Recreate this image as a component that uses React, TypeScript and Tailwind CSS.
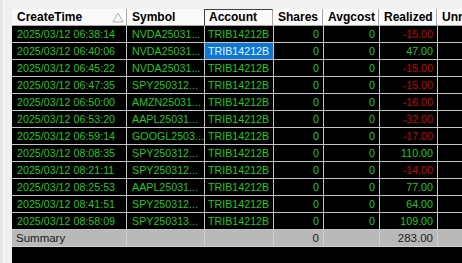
import React from "react";

type Row = { t: string; s: string; r: string; neg: boolean };

const rows: Row[] = [
  { t: "2025/03/12 06:38:14", s: "NVDA25031...", r: "-15.00", neg: true },
  { t: "2025/03/12 06:40:06", s: "NVDA25031...", r: "47.00", neg: false },
  { t: "2025/03/12 06:45:22", s: "NVDA25031...", r: "-15.00", neg: true },
  { t: "2025/03/12 06:47:35", s: "SPY250312...", r: "-15.00", neg: true },
  { t: "2025/03/12 06:50:00", s: "AMZN25031...", r: "-16.00", neg: true },
  { t: "2025/03/12 06:53:20", s: "AAPL25031...", r: "-32.00", neg: true },
  { t: "2025/03/12 06:59:14", s: "GOOGL2503...", r: "-17.00", neg: true },
  { t: "2025/03/12 08:08:35", s: "SPY250312...", r: "110.00", neg: false },
  { t: "2025/03/12 08:21:11", s: "SPY250312...", r: "-14.00", neg: true },
  { t: "2025/03/12 08:25:53", s: "AAPL25031...", r: "77.00", neg: false },
  { t: "2025/03/12 08:41:51", s: "SPY250312...", r: "64.00", neg: false },
  { t: "2025/03/12 08:58:09", s: "SPY250313...", r: "109.00", neg: false },
];

const font = { fontFamily: '"Liberation Sans", Arial, sans-serif' };

export default function App() {
  return (
    <div className="w-[462px] h-[263px] overflow-hidden bg-[#f0f0f0] flex" style={font}>
      <div className="w-[12px] shrink-0 flex">
        <div className="w-[3px] bg-[#e6e6e6]" />
        <div className="w-[1px] bg-[#fbfbfb]" />
        <div className="flex-1 bg-[#f0f0f0]" />
      </div>
      <div className="flex-1 flex flex-col min-w-0">
        <div className="h-[9px] shrink-0 bg-[#f0f0f0]" />
        <div className="flex-1 bg-black flex flex-col w-[470px]">
          {/* header */}
          <div className="flex h-[17px] shrink-0 bg-[#fafafa] text-[12px] font-bold text-black leading-[16px]">
            <div className="w-[115px] shrink-0 border-r border-b border-[#a8a8a8] pl-[5px] flex items-center justify-between pr-[3px] relative">
              <span>CreateTime</span>
              <svg width="12" height="11" viewBox="0 0 12 11" className="mr-[-1px]">
                <path d="M6 1 L11 10 L1 10 Z" fill="none" stroke="#b0b0b0" strokeWidth="1" />
              </svg>
            </div>
            <div className="w-[78px] shrink-0 border-r border-b border-[#a8a8a8] pl-[5px]">Symbol</div>
            <div className="w-[69px] shrink-0 border-l border-t border-r border-b border-l-[#404040] border-t-[#404040] border-r-[#a8a8a8] border-b-[#a8a8a8] pl-[4px] -ml-[1px] leading-[15px]">Account</div>
            <div className="w-[50px] shrink-0 border-r border-b border-[#a8a8a8] pl-[5px]">Shares</div>
            <div className="w-[56px] shrink-0 border-r border-b border-[#a8a8a8] pl-[5px]">Avgcost</div>
            <div className="w-[58px] shrink-0 border-r border-b border-[#a8a8a8] pl-[5px]">Realized</div>
            <div className="flex-1 border-b border-[#a8a8a8] pl-[5px]">Unrealized</div>
          </div>
          {rows.map((row, i) => (
            <div key={i} className="flex h-[17px] shrink-0 text-[10.7px] leading-[16px] text-[#1fc81f]">
              <div className="w-[115px] shrink-0 border-r border-b border-[#c4c4c4] pl-[5px] whitespace-nowrap overflow-hidden">{row.t}</div>
              <div className="w-[78px] shrink-0 border-r border-b border-[#c4c4c4] pl-[5px] whitespace-nowrap overflow-hidden">{row.s}</div>
              <div
                className={
                  i === 1
                    ? "w-[69px] shrink-0 border-r border-b border-[#c4c4c4] pl-[3px] bg-[#0a78d4] text-[#e8f4ff] whitespace-nowrap overflow-hidden"
                    : "w-[69px] shrink-0 border-r border-b border-[#c4c4c4] pl-[3px] whitespace-nowrap overflow-hidden"
                }
              >
                TRIB14212B
              </div>
              <div className="w-[50px] shrink-0 border-r border-b border-[#c4c4c4] pr-[4px] text-right">0</div>
              <div className="w-[56px] shrink-0 border-r border-b border-[#c4c4c4] pr-[4px] text-right">0</div>
              <div
                className={
                  row.neg
                    ? "w-[58px] shrink-0 border-r border-b border-[#c4c4c4] pr-[4px] text-right text-[#c40000]"
                    : "w-[58px] shrink-0 border-r border-b border-[#c4c4c4] pr-[4px] text-right"
                }
              >
                {row.r}
              </div>
              <div className="flex-1 border-b border-[#c4c4c4]" />
            </div>
          ))}
          {/* summary */}
          <div className="flex h-[17px] shrink-0 text-[11.5px] leading-[16px] text-[#1a1a1a] bg-[#b9b9b9]">
            <div className="w-[115px] shrink-0 border-r border-b border-[#d0d0d0] pl-[4px]">Summary</div>
            <div className="w-[78px] shrink-0 border-r border-b border-[#d0d0d0]" />
            <div className="w-[69px] shrink-0 border-r border-b border-[#d0d0d0]" />
            <div className="w-[50px] shrink-0 border-r border-b border-[#d0d0d0] pr-[4px] text-right">0</div>
            <div className="w-[56px] shrink-0 border-r border-b border-[#d0d0d0]" />
            <div className="w-[58px] shrink-0 border-r border-b border-[#d0d0d0] pr-[4px] text-right">283.00</div>
            <div className="flex-1 border-b border-[#d0d0d0]" />
          </div>
          <div className="flex-1 bg-black" />
        </div>
      </div>
    </div>
  );
}
